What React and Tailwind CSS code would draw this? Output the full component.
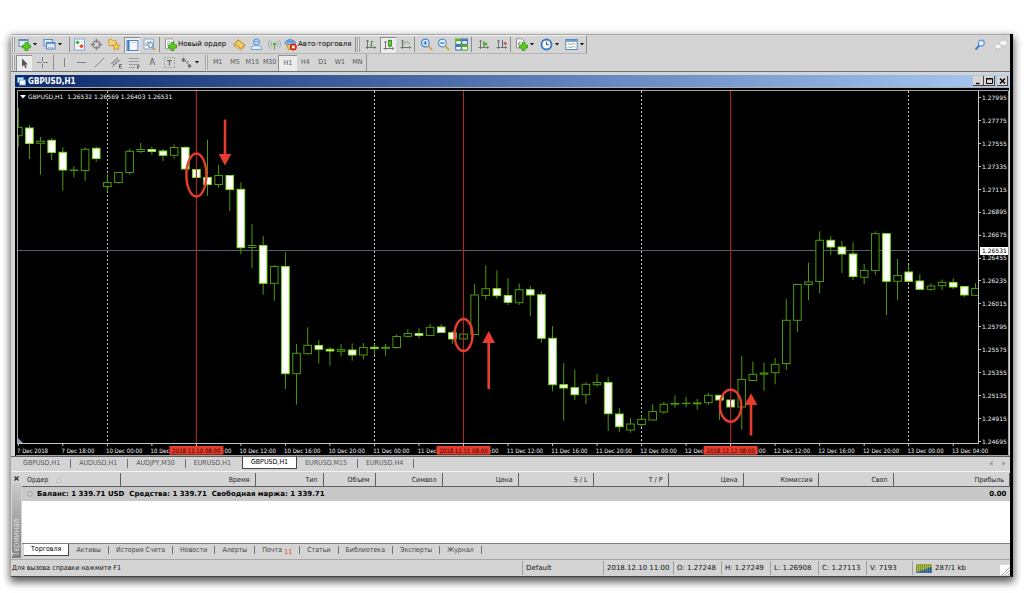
import React from "react";

/* ---------- chart data: [high, low, bodyTop, bodyBottom, filled] in canvas units ---------- */
const CANDLES = [
  [108, 147, 127.3, 135.7, 0], [125, 159, 128, 143.5, 1], [137, 174.7, 141.3, 143.3, 0], [138.3, 160.3, 140.3, 152.5, 1],
  [147.3, 190.7, 152.3, 170, 1], [166, 177.3, 170, 170.4, 0], [147.3, 180.7, 149.3, 170.5, 0], [146.7, 161.7, 148.3, 158.5, 1],
  [174, 191.7, 182.5, 186.5, 0], [172, 183.7, 172.5, 182.5, 0], [149, 174.7, 151.3, 172.5, 0], [143, 153, 149.5, 151.5, 0],
  [146.7, 154.7, 149.5, 151.5, 1], [149, 161, 151, 155.3, 1], [144.3, 158.7, 147.5, 155.3, 0], [146, 169.3, 147.5, 169, 1],
  [169, 178, 169.5, 177.5, 1], [139.7, 196, 177.5, 184.5, 1], [165, 187.7, 175.5, 184.5, 0], [175.3, 211, 175.5, 189.5, 1],
  [182.3, 254.3, 189.3, 247.7, 1], [224.3, 268.3, 245.5, 247.5, 0], [236, 294.7, 245.5, 283.3, 1], [265, 300.7, 266.5, 283.3, 0],
  [252.3, 389, 266.5, 373.7, 1], [344, 404.7, 353.3, 373.7, 0], [327.3, 354.3, 345.3, 353.7, 0], [340, 363.3, 345.5, 349.3, 1],
  [347, 365.7, 349.3, 351, 1], [344, 356.3, 349.7, 351.3, 0], [343.3, 360.7, 350, 355, 1], [343, 359.3, 347.5, 355, 0],
  [344, 355, 347.3, 348.5, 1], [344, 355.7, 347.3, 348.3, 0], [334.3, 348.7, 336.5, 347.5, 0], [329.3, 337.7, 333.5, 336.3, 0],
  [328.3, 338.3, 333.5, 335.5, 1], [324, 336, 327.3, 335.5, 0], [324.3, 333, 327, 332.5, 1], [330.7, 344, 332.7, 339, 1],
  [332, 340, 334, 339, 0], [284, 335, 295, 334.5, 0], [265.3, 299.7, 288.7, 295.5, 0], [270.3, 298.7, 288.7, 295.7, 1],
  [278.3, 305, 295.5, 302.3, 1], [283.3, 305, 289.7, 302.7, 0], [285.7, 316.3, 289.7, 295, 1], [291.7, 342.7, 294.7, 338.3, 1],
  [326, 391.3, 338.3, 384.7, 1], [363, 420.7, 384.7, 388, 1], [369.7, 400, 387.7, 394.7, 1], [382.3, 404, 384.3, 394.7, 0],
  [374, 386.7, 382.5, 384.7, 0], [377, 431, 382.5, 413.7, 1], [408, 432.3, 414, 426.7, 1], [418, 432.7, 424, 430, 0],
  [415.7, 426.7, 419.3, 424.5, 0], [404.3, 420.3, 411.5, 420, 0], [402, 413.7, 404.3, 412, 0], [395.3, 407.7, 403.4, 404.2, 0],
  [397, 407, 403.3, 403.6, 0], [399, 409.7, 402.9, 403.8, 0], [393, 405, 395.3, 402.7, 0], [395, 420, 395.3, 400, 1],
  [399.7, 407.5, 400, 407, 1], [356, 429.7, 379.5, 407, 0], [361.7, 381.3, 374.3, 380.5, 0], [362.7, 390.7, 373, 374.2, 0],
  [358, 384.3, 364.3, 372.7, 0], [298.7, 370, 320.3, 363.5, 0], [283.7, 332, 284.5, 320.3, 0], [262.7, 300.3, 282, 284.5, 0],
  [231.3, 293.3, 240.3, 281.5, 0], [236.3, 255, 240.3, 247, 1], [241, 273, 247, 254, 1], [242.3, 280, 254, 276.5, 1],
  [264, 284, 270.5, 277.3, 0], [231.3, 274.7, 233.7, 270.5, 0], [233.3, 315, 233.7, 281.3, 1], [259, 300.3, 275.5, 281.3, 0],
  [265, 282.3, 272, 281.3, 1], [274, 290, 281, 289.3, 1], [283.3, 290.7, 286, 289.3, 0], [279.3, 290.3, 282.3, 285.7, 0],
  [278.3, 289, 282.5, 287, 1], [286, 297, 286.5, 295, 1], [283.3, 296, 288.5, 295.3, 0],
];
const barX = (i) => 18.3 + i * 11.13;

const PRICES = ["1.27995", "1.27775", "1.27555", "1.27335", "1.27115", "1.26895", "1.26675", "1.26455", "1.26235", "1.26015", "1.25795", "1.25575", "1.25355", "1.25135", "1.24915", "1.24695"];

const TIMES = ["7 Dec 2018", "7 Dec 18:00"];
["10", "11", "12"].forEach((d) => ["00", "04", "08", "12", "16", "20"].forEach((h) => TIMES.push(`${d} Dec ${h}:00`)));
TIMES.push("13 Dec 00:00", "13 Dec 04:00");

const MARKS = [
  { i: 16, label: "2018.12.10 08:00", cy: 175, rx: 10, ry: 21.5 },
  { i: 40, label: "2018.12.11 08:00", cy: 335, rx: 9, ry: 16 },
  { i: 64, label: "2018.12.12 08:00", cy: 405.7, rx: 10.7, ry: 16 },
];

function Chart() {
  return (
    <svg viewBox="15 88 994 368" className="block h-auto w-full font-['DejaVu_Sans',sans-serif]" role="img" aria-label="GBPUSD,H1" fontSize="6" fill="#f0f0f0">
      <rect x="15" y="88" width="994" height="368" fill="#000" />
      <path d="M17.5 444V90.5H1008.5V455.5H16" fill="none" stroke="#a0a4a4" />
      <path d="M978.5 90.5V443.5H17.5" fill="none" stroke="#c4c4c4" />
      <path d="M18 438v5h5z" fill="#8a9ab0" />
      <defs>
        <clipPath id="plot"><rect x="18" y="91" width="960" height="352" /></clipPath>
      </defs>
      <path d="M18 250.5H978" stroke="#56606e" />
      {[8, 32, 56, 80].map((i) => (
        <path key={i} d={`M${Math.floor(barX(i)) + 0.5} 91V443`} stroke="#c8c8c8" strokeDasharray="2 2" />
      ))}
      <g clipPath="url(#plot)">
        {CANDLES.map(([h, l, t, b, f], i) => (
          <g key={i} stroke={f ? "#7fe018" : "#4c9a06"}>
            <path d={`M${barX(i)} ${h}V${l}`} stroke="#4c9a06" />
            <rect x={barX(i) - 3.8} y={t} width="7.6" height={b - t} fill={f ? "#fff" : "#000"} />
          </g>
        ))}
      </g>
      {MARKS.map((m) => (
        <g key={m.i}>
          <path d={`M${barX(m.i)} 91V446`} stroke="#a82c22" strokeWidth="1.1" />
          <ellipse cx={barX(m.i)} cy={m.cy} rx={m.rx} ry={m.ry} fill="none" stroke="#e63c2e" strokeWidth="2.4" />
        </g>
      ))}
      <g fill="#e63c2e">
        <path d="M223.8 119.5h2.5V154h5l-6.3 11.5-6.3-11.5h5z" />
        <path d="M487.4 389h2.6V343h5l-6.3-12-6.3 12h5z" />
        <path d="M749.7 435.5h2.6V405h5l-6.3-11.7-6.3 11.7h5z" />
      </g>
      <path d="M20 95h6l-3 3.4z" fill="#fff" />
      <text x="28" y="98.700">GBPUSD,H1&nbsp; 1.26532 1.26569 1.26403 1.26531</text>
      {PRICES.map((p, k) => (
        <g key={p}>
          <path d={`M978 ${Math.round(97 + k * 22.93)}.5h3`} stroke="#c4c4c4" />
          <text x="982" y={99.8 + k * 22.93}>{p}</text>
        </g>
      ))}
      <rect x="980" y="247" width="28" height="8" fill="#fff" />
      <text x="982" y="253.200" fill="#000">1.26531</text>
      <g className="font-['DejaVu_Sans_Condensed',sans-serif]">
        {TIMES.map((t, k) => (
          <g key={t}>
            <path d={`M${barX(k * 4)} 443v3`} stroke="#c4c4c4" />
            <text x={barX(k * 4) - 1.3} y="453">{t}</text>
          </g>
        ))}
        {MARKS.map((m) => (
          <g key={m.i}>
            <rect x={barX(m.i) - 27} y="446" width="54" height="8.6" fill="#e63c2e" />
            <text x={barX(m.i)} y="453" textAnchor="middle" fill="#2a0400">{m.label}</text>
          </g>
        ))}
      </g>
    </svg>
  );
}

/* ---------- icons ---------- */
const Svg = ({ children, s = 13 }) => (
  <svg width={s} height={s} viewBox="0 0 13 13" fill="none" aria-hidden="true" className="shrink-0">{children}</svg>
);
const plus = <path d="M7 4.500h3v2.500h2.500v3H10v2.500H7V10H4.500V7H7z" fill="#5cd01e" stroke="#2c8a0c" strokeWidth=".7" />;
const axes = <path d="M3.500 2v9M1.500 9.500h10M2.500 3.500l1-1.500 1 1.500M10.200 8.400l1.500 1.100-1.500 1.100" stroke="#6a6a6a" strokeWidth=".9" />;

const ICONS = {
  newChart: <Svg><rect x="1" y="1.500" width="9" height="7" fill="#e8f0f8" stroke="#6a8fb8" /><path d="M1 2.200h9" stroke="#5a86b8" strokeWidth="1.500" />{plus}</Svg>,
  profiles: <Svg><rect x="1" y="1.500" width="8.500" height="6.500" fill="#dce9f6" stroke="#5c8cc4" /><rect x="3.500" y="4.500" width="8.500" height="6.500" fill="#e8f1fa" stroke="#4a80c0" /><path d="M4 5.500h8" stroke="#6c9fd8" strokeWidth="1.300" /><path d="M5 9.300h5.500" stroke="#9ab8dc" /></Svg>,
  market: <Svg><rect x="1.500" y="1" width="10" height="11" fill="#fff" stroke="#7aa6d4" /><path d="M4.500 2.200l2.200 2.200-2.200 2.200-2.200-2.200z" fill="#3cae2a" /><path d="M8.500 6l2.300 2.300-2.300 2.300-2.300-2.300z" fill="#e04a2a" /><path d="M7.500 4h3M3 8.500h2" stroke="#b4c8dc" strokeWidth=".8" /></Svg>,
  data: <Svg><circle cx="6.500" cy="6.500" r="3.600" stroke="#858585" strokeWidth="1.500" /><path d="M6.500 .8v4M6.500 8.200v4M.8 6.500h4M8.200 6.500h4" stroke="#858585" strokeWidth="1.300" /></Svg>,
  favorites: <Svg><path d="M.8 1.500h3l1 1.200h3.500v5H.8z" fill="#f4d478" stroke="#c8963c" strokeWidth=".8" /><path d="M8.300 4.500l1.200 2.400 2.700.4-2 1.900.5 2.700-2.400-1.300-2.400 1.300.5-2.700-2-1.900 2.700-.4z" fill="#f8cc48" stroke="#b8801c" strokeWidth=".7" /></Svg>,
  navigator: <Svg><rect x="1" y="1.500" width="11" height="10" fill="#f4f9ff" stroke="#4a84c8" /><path d="M1.500 2h2v9h-2z" fill="#3a78c4" /><path d="M5 3.500h6" stroke="#c0d4ec" /></Svg>,
  tester: <Svg><rect x="1" y="1" width="9.500" height="10" fill="#eef3f8" stroke="#88a8c8" /><path d="M3 8V5M5 7V3M7.500 5V3" stroke="#78a060" strokeWidth=".9" /><circle cx="7.500" cy="7" r="2.600" fill="#cfe4f8" fillOpacity=".8" stroke="#5a8cc4" /><path d="M9.500 9l2.600 3" stroke="#c8963c" strokeWidth="1.500" /></Svg>,
  order: <Svg><path d="M1.500.8h6l2 2v8h-8z" fill="#fff" stroke="#888" strokeWidth=".9" /><path d="M3 3.500h3.500M3 5.500h3M3 7.500h2" stroke="#999" strokeWidth=".8" />{plus}</Svg>,
  editor: <Svg><path d="M1 6.500L5 1.800l7 5.200-4 4.500z" fill="#ecc050" stroke="#a87820" strokeWidth=".8" /><path d="M1 6.500v1.800l7 4.200 4-4.500V7l-4 4z" fill="#fff4d0" stroke="#a87820" strokeWidth=".6" /><path d="M4.500 4.500l4.500 3.300" stroke="#fbe49c" strokeWidth="1.300" /></Svg>,
  community: <Svg><circle cx="6.500" cy="4" r="3" fill="#b8dcf8" stroke="#4c8cd4" /><path d="M1.500 11.500c-.8-2.700 1.200-3.600 3-3.800l4 .1c2.200.2 3.900 1.200 3.200 3.700z" fill="#e8f2fc" stroke="#6c9cd4" /><path d="M4.500 3.500h4" stroke="#6ca4e0" /></Svg>,
  signals: <Svg><circle cx="6.500" cy="6" r="1.600" fill="#5aa83c" /><path d="M6.500 7v5" stroke="#6cae48" strokeWidth="1.300" /><path d="M4 3.500a3.600 3.600 0 000 5.200M9 3.500a3.600 3.600 0 010 5.200" stroke="#8cb87c" /><path d="M2.200 1.700a6 6 0 000 8.800M10.800 1.700a6 6 0 010 8.800" stroke="#94aeca" /></Svg>,
  auto: <Svg><path d="M1.200 5h10L8 11.500H4.500z" fill="#f0c454" stroke="#b88424" strokeWidth=".7" /><ellipse cx="6.200" cy="4.500" rx="5.500" ry="2" fill="#8cc0f0" stroke="#3c78b8" strokeWidth=".7" /><path d="M3 4C3 .5 9.400.5 9.400 4z" fill="#6cace8" stroke="#3c78b8" strokeWidth=".7" /><circle cx="9.300" cy="9" r="3.300" fill="#dc3420" stroke="#a81c10" strokeWidth=".5" /><rect x="8" y="7.700" width="2.600" height="2.600" fill="#fff" /></Svg>,
  bars: <Svg>{axes}<path d="M7.500 3v5.500M7.500 3.500h1.600M5.900 7.800h1.600" stroke="#3c9a2c" strokeWidth="1.100" /></Svg>,
  candles: <Svg>{axes}<path d="M8 .5v8" stroke="#2c8a1c" /><rect x="6.400" y="1.500" width="3.200" height="5.500" fill="#5cd02c" stroke="#2c8a1c" strokeWidth=".8" /></Svg>,
  line: <Svg>{axes}<path d="M4 7.500c1.500-4 3.500-5 7-1.500" stroke="#5cae4c" /></Svg>,
  zoomIn: <Svg><circle cx="5.300" cy="5" r="3.900" fill="#e4f2fe" stroke="#4484d0" strokeWidth="1.200" /><path d="M3.300 5h4M5.300 3v4" stroke="#2c68c0" strokeWidth="1.200" /><path d="M8.400 8.200l3.600 3.600" stroke="#d0a040" strokeWidth="1.900" /></Svg>,
  zoomOut: <Svg><circle cx="5.300" cy="5" r="3.900" fill="#e4f2fe" stroke="#5c90d0" strokeWidth="1.200" /><path d="M3.300 5h4" stroke="#2c68c0" strokeWidth="1.200" /><path d="M8.400 8.200l3.600 3.600" stroke="#d0a040" strokeWidth="1.900" /></Svg>,
  tile: <Svg><g strokeWidth=".9"><rect x=".8" y="1" width="5.400" height="5.200" fill="#fff" stroke="#3c9a1c" /><rect x="6.900" y="1" width="5.400" height="5.200" fill="#fff" stroke="#2c60b0" /><rect x=".8" y="6.800" width="5.400" height="5.200" fill="#fff" stroke="#2c60b0" /><rect x="6.900" y="6.800" width="5.400" height="5.200" fill="#fff" stroke="#3c9a1c" /></g><path d="M.5 2.300h6M6.600 8.100h6" stroke="#4cae24" strokeWidth="2" /><path d="M6.600 2.300h6M.5 8.100h6" stroke="#3c74c8" strokeWidth="2" /></Svg>,
  scroll: <Svg>{axes}<path d="M6.500 3.500l4 2.500-4 2.500z" fill="#5cc030" stroke="#2c8a1c" strokeWidth=".5" /></Svg>,
  shift: <Svg>{axes}<path d="M7.500 2v7" stroke="#3c68b0" /><path d="M8.500 5.500h3.500M10.200 3.800v3.400" stroke="#d04028" strokeWidth="1.100" /></Svg>,
  indicators: <Svg><path d="M1.500.8h5l2.500 2v7h-7.500z" fill="#fff" stroke="#888" strokeWidth=".9" /><path d="M3.300 7.500c0-3 .8-4 2.500-4M3 5.500h2.500" stroke="#777" strokeWidth=".8" />{plus}</Svg>,
  clock: <Svg><circle cx="6.500" cy="6.500" r="5" fill="#f4f9ff" stroke="#3c78cc" strokeWidth="1.900" /><path d="M6.500 3.600v3.100h2.400" stroke="#444" strokeWidth=".9" /></Svg>,
  template: <Svg><rect x=".8" y="1.500" width="11.400" height="10" fill="#fff" stroke="#5c88bc" /><path d="M1 2.900h11" stroke="#6c9cd4" strokeWidth="1.900" /><path d="M2.500 6.500c2-2 3 .8 4.500-.3s2-.5 3.500 0M2.500 9.500c2-1.500 3 .8 4.500-.3s2-.5 3.500 0" stroke="#7c9c7c" strokeWidth=".8" /></Svg>,
  cursor: <Svg><path d="M4 1.500v8.300l2-1.700 1.400 3.200 1.400-.6-1.400-3.100h2.600z" fill="#555" /></Svg>,
  cross: <Svg><path d="M6.500 1v4.500M6.500 7.500V12M1 6.500h4.500M7.500 6.500H12" stroke="#808080" /></Svg>,
  vline: <Svg><path d="M6.500 2v9" stroke="#808080" /></Svg>,
  hline: <Svg><path d="M2 6.500h9" stroke="#808080" /></Svg>,
  trend: <Svg><path d="M2 11l9-9" stroke="#808080" /></Svg>,
  channel: <Svg><path d="M1 8l7-6.500M2 11l8.500-7.500M2.500 6l1.500 3.500M4.500 4.500L6 8M6.500 2.500L8 6" stroke="#777" strokeWidth=".9" /><path d="M11.800 8.500H9.500v3.500h2.300M9.500 10.200h2" stroke="#555" strokeWidth=".8" /></Svg>,
  fibo: <Svg><path d="M1 2.500h10.500M1 5.500h10.500M1 8.500h10.500M1 11.500h6" stroke="#888" strokeDasharray="1.500 .6" /><path d="M9.500 12.800V9.800h2.300M9.500 11.200h1.800" stroke="#555" strokeWidth=".8" /></Svg>,
  label: <Svg><rect x="1.500" y="1.500" width="10" height="10" stroke="#999" strokeDasharray="1.500 1" strokeWidth=".9" /><path d="M4 4.500h5M6.500 4.500v5" stroke="#666" strokeWidth="1.200" /></Svg>,
  shapes: <Svg><path d="M3.500 1.500L1 4.500h1.700V6h1.600V4.500H6zM9.500 12L7 9.500h1.700V8h1.600v1.500H12z" fill="#666" /><path d="M5 5l3.500 3.500M7 5l2 1" stroke="#777" /></Svg>,
};

const Sep = () => <span className="block h-[15px] w-px shrink-0 bg-[#8c8c8c]" />;
const Grip = () => <span className="block h-[15px] w-[3px] shrink-0 border-x border-[#a0a0a0] bg-[#e8e8e8]" />;

function Tool({ icon, name, active }) {
  return (
    <button type="button" aria-label={name} aria-pressed={active}
      className={"flex h-4 w-4 shrink-0 items-center justify-center " + (active ? "bg-[#ececec] border-t border-l border-[#909090]" : "")}>
      {ICONS[icon]}
    </button>
  );
}

function MenuTool({ icon, name }) {
  return (
    <button type="button" aria-label={name} className="flex h-4 w-[19px] shrink-0 items-center justify-between">
      {ICONS[icon]}
      <svg width="4" height="3" viewBox="0 0 4 3" className="shrink-0" aria-hidden="true"><path d="M0 0h4L2 2.600z" fill="#111" /></svg>
    </button>
  );
}

function TopToolbar() {
  return (
    <div className="flex h-5 items-stretch justify-between border-t border-[#a8a8a8]">
      <div className="flex items-center border-t border-r border-b border-t-[#f0f0f0] border-r-[#909090] border-b-[#b4b4b4] pl-px font-['DejaVu_Sans',sans-serif] text-[7px]">
        <Grip />
        <div className="ml-[3px] flex w-[44px] justify-between">
          <MenuTool icon="newChart" name="Новый график" />
          <MenuTool icon="profiles" name="Профили" />
        </div>
        <div className="ml-[7px]"><Sep /></div>
        <div className="ml-px flex w-[86px] justify-between">
          <Tool icon="market" name="Обзор рынка" />
          <Tool icon="data" name="Окно данных" />
          <Tool icon="favorites" name="Избранное" />
          <Tool icon="navigator" name="Навигатор" active />
          <Tool icon="tester" name="Тестер стратегий" />
        </div>
        <div className="ml-[2px]"><Sep /></div>
        <button type="button" className="ml-1 flex h-4 w-[63px] items-center gap-px whitespace-nowrap">{ICONS.order}Новый ордер</button>
        <div className="ml-1 flex w-[51px] justify-between">
          <Tool icon="editor" name="MetaEditor" />
          <Tool icon="community" name="Сообщество" />
          <Tool icon="signals" name="Сигналы" />
        </div>
        <button type="button" className="ml-[2px] flex h-4 w-[71px] items-center gap-px whitespace-nowrap">{ICONS.auto}Авто-торговля</button>
        <Sep />
        <div className="ml-px"><Grip /></div>
        <div className="ml-[2px] flex w-[51px] justify-between">
          <Tool icon="bars" name="Бары" />
          <Tool icon="candles" name="Свечи" active />
          <Tool icon="line" name="Линия" />
        </div>
        <div className="ml-px"><Sep /></div>
        <div className="ml-[3px] flex w-[51px] justify-between">
          <Tool icon="zoomIn" name="Увеличить" />
          <Tool icon="zoomOut" name="Уменьшить" />
          <Tool icon="tile" name="Окна мозаикой" />
        </div>
        <div className="ml-[2px]"><Sep /></div>
        <div className="ml-[3px] flex w-[34px] justify-between">
          <Tool icon="scroll" name="Автопрокрутка" />
          <Tool icon="shift" name="Сдвиг графика" />
        </div>
        <div className="ml-px"><Sep /></div>
        <div className="mr-[2px] ml-1 flex w-[69px] justify-between">
          <MenuTool icon="indicators" name="Индикаторы" />
          <MenuTool icon="clock" name="Периоды" />
          <MenuTool icon="template" name="Шаблоны" />
        </div>
      </div>
      <div className="flex items-center gap-2 pr-[2px]">
        <button type="button" aria-label="Поиск">
          <svg width="12" height="12" viewBox="0 0 12 12" fill="none" aria-hidden="true"><circle cx="7.300" cy="4.200" r="3" fill="#e4f0fc" stroke="#5c94dc" strokeWidth="1.200" /><path d="M5.200 6.600L1.500 10.500" stroke="#3c7cd0" strokeWidth="2" /></svg>
        </button>
        <button type="button" aria-label="Чат">
          <svg width="14" height="12" viewBox="0 0 14 12" aria-hidden="true"><g fill="#f4f4f4" stroke="#b0b0b0" strokeWidth=".6"><path d="M9.500 1c2.600 0 4 1.300 4 2.900 0 1-.5 1.700-1.200 2.200l.5 1.700-1.900-1.100c-3 .5-5.400-.9-5.400-2.800C5.500 2.300 7 1 9.500 1z" /><path d="M4 5c2.200 0 3.500 1 3.500 2.400S6.200 9.700 4 9.700l-2 1.300.3-1.700C1.200 9 .6 8.300.6 7.400.6 6 1.800 5 4 5z" /></g></svg>
        </button>
      </div>
    </div>
  );
}

const PERIODS = ["M1", "M5", "M15", "M30", "H1", "H4", "D1", "W1", "MN"];

function LineToolbar() {
  return (
    <div className="flex h-[18px] border-b border-[#707070]">
      <div className="flex items-center border-r border-[#909090] pl-px text-[7px] text-[#555]">
        <Grip />
        <div className="ml-px flex w-[34px] justify-between">
          <Tool icon="cursor" name="Курсор" active />
          <Tool icon="cross" name="Перекрестие" />
        </div>
        <div className="ml-[3px]"><Sep /></div>
        <div className="ml-[2px] flex w-[122px] justify-between">
          <Tool icon="vline" name="Вертикальная линия" />
          <Tool icon="hline" name="Горизонтальная линия" />
          <Tool icon="trend" name="Трендовая линия" />
          <Tool icon="channel" name="Канал" />
          <Tool icon="fibo" name="Фибоначчи" />
          <button type="button" className="h-4 w-4 text-[9px]">A</button>
          <Tool icon="label" name="Метка" />
        </div>
        <div className="ml-[2px]"><MenuTool icon="shapes" name="Стрелки" /></div>
        <div className="ml-[6px]"><Grip /></div>
        <div className="ml-px flex w-[157px]">
          {PERIODS.map((p) => (
            <button key={p} type="button" aria-pressed={p === "H1"}
              className={"h-4 flex-1 text-center " + (p === "H1" ? "border-t border-l border-[#909090] bg-[#ececec]" : "")}>{p}</button>
          ))}
        </div>
      </div>
    </div>
  );
}

const WinButton = ({ name, children }) => (
  <button type="button" aria-label={name} className="flex h-[10px] w-[11px] items-center justify-center border-r border-b border-[#444] bg-[#d6d6d2]">
    <svg width="9" height="8" viewBox="0 0 9 8" fill="none" stroke="#000" aria-hidden="true">{children}</svg>
  </button>
);

function ChartWindow() {
  return (
    <section className="pt-[3px] pr-px pl-1">
      <div className="flex h-[13px] items-center justify-between border-b border-[#b0b0b0] bg-linear-to-r from-[#0a2a6c] via-[#5878b4] to-[#a8caf2] pr-px pl-[2px]">
        <h1 className="flex items-center gap-[2px] pt-px text-[8px] font-bold text-white">
          <svg width="9" height="9" viewBox="0 0 9 9" aria-hidden="true"><rect x=".5" y=".5" width="6" height="5" fill="#d8ecff" stroke="#5c9cdc" /><rect x="2.500" y="3" width="6" height="5" fill="#fff" stroke="#5c9cdc" /></svg>
          GBPUSD,H1
        </h1>
        <div className="flex">
          <WinButton name="Свернуть"><path d="M2 6.500h3.500" strokeWidth="1.400" /></WinButton>
          <WinButton name="Развернуть"><path d="M1.500 1.500h6v5h-6zM1 2h7" /></WinButton>
          <span className="w-[2px]" />
          <WinButton name="Закрыть"><path d="M2 1.500l5 5M7 1.500l-5 5" strokeWidth="1.500" /></WinButton>
        </div>
      </div>
      <Chart />
    </section>
  );
}

const CHART_TABS = ["GBPUSD,H1", "AUDUSD,H1", "AUDJPY,M30", "EURUSD,H1", "GBPUSD,H1", "EURUSD,M15", "EURUSD,H4"];

function ChartTabs() {
  return (
    <nav className="flex h-[15px] items-start justify-between border-t border-[#606060] text-[7px] text-[#555]">
      <div className="flex pl-1">
        {CHART_TABS.map((t, i) =>
          i === 4 ? (
            <button key={i} type="button" aria-current="true" className="h-3 border-r border-b border-l border-[#444] bg-white px-2 text-black">{t}</button>
          ) : (
            <button key={i} type="button" className="flex h-3 items-center pl-2">
              {t}
              <span className={"ml-[10px] h-[9px] w-px " + (i === 3 ? "bg-transparent" : "bg-[#707070]")} />
            </button>
          )
        )}
      </div>
      <div className="flex h-3 items-center gap-[9px] pr-1">
        <button type="button" aria-label="Назад"><svg width="4" height="5" viewBox="0 0 4 5" aria-hidden="true"><path d="M3.500 0v5L.5 2.500z" fill="#999" /></svg></button>
        <button type="button" aria-label="Вперед"><svg width="4" height="5" viewBox="0 0 4 5" aria-hidden="true"><path d="M.5 0v5l3-2.500z" fill="#999" /></svg></button>
      </div>
    </nav>
  );
}

const COLUMNS = [
  ["Ордер", "w-[98px]"], ["Время", "w-[135px]"], ["Тип", "w-[68px]"], ["Объем", "w-[52px]"], ["Символ", "w-[67px]"], ["Цена", "w-[76px]"],
  ["S / L", "w-[75px]"], ["T / P", "w-[75px]"], ["Цена", "w-[75px]"], ["Комиссия", "w-[75px]"], ["Своп", "w-[75px]"], ["Прибыль", ""],
];
const TERMINAL_TABS = ["Активы", "История Счета", "Новости", "Алерты", "Почта", "Статьи", "Библиотека", "Эксперты", "Журнал"];

function Terminal() {
  return (
    <section className="flex border-t border-[#f4f4f4] pt-px">
      <div className="flex w-[11px] shrink-0 flex-col items-center">
        <button type="button" aria-label="Закрыть терминал" className="flex h-[10px] items-center">
          <svg width="5" height="5" viewBox="0 0 5 5" aria-hidden="true"><path d="M.5.5l4 4M4.500.5l-4 4" stroke="#222" strokeWidth="1.100" /></svg>
        </button>
        <div className="h-[75px] w-[9px] rotate-180 overflow-hidden bg-linear-to-t from-[#cacaca] to-[#808080] pt-[2px] text-[8px] leading-[9px] whitespace-nowrap text-[#dcdcdc] [writing-mode:vertical-rl]">
          Терминал
        </div>
      </div>
      <div className="min-w-0 flex-1">
        <div className="h-[71px] border-b border-[#808080] bg-white">
          <table className="w-full table-fixed border-collapse">
            <thead>
              <tr className="h-[13px] bg-[#d4d4d4] text-[7px]">
                {COLUMNS.map(([c, w], i) => (
                  <th key={i} scope="col" className={w + " border-r border-b border-[#606060] px-[5px] pt-[2px] pb-0 leading-[10px] font-normal text-[#222] " + (i === 0 ? "text-left" : "text-right")}>
                    {c}
                    {i === 0 && <svg width="6" height="5" viewBox="0 0 6 5" className="ml-2 inline" aria-hidden="true"><path d="M.5 4.500h5L3 .5z" fill="#e4e4e4" stroke="#aaa" strokeWidth=".6" /></svg>}
                  </th>
                ))}
              </tr>
            </thead>
            <tbody className="font-['DejaVu_Sans',sans-serif]">
              <tr className="h-[14px] bg-[#c8c8c8] text-[7px] leading-[14px] font-bold text-black">
                <td colSpan={11} className="px-[5px] py-0 whitespace-nowrap">
                  <svg width="6" height="6" viewBox="0 0 6 6" className="mr-1 inline" aria-hidden="true"><circle cx="3" cy="3" r="2.200" fill="#ddd" stroke="#999" /></svg>
                  Баланс: 1 339.71 USD&nbsp; Средства: 1 339.71&nbsp; Свободная маржа: 1 339.71
                </td>
                <td className="px-[3px] py-0 text-right">0.00</td>
              </tr>
            </tbody>
          </table>
        </div>
        <nav className="flex h-[15px] items-start pl-[2px] text-[7px] text-[#444]">
          <button type="button" aria-current="true" className="h-3 border-r border-b border-[#444] bg-white px-[7px] text-black">Торговля</button>
          {TERMINAL_TABS.map((t) => (
            <button key={t} type="button" className="flex h-3 items-center pl-[7px]">
              {t}
              {t === "Почта" && <span className="ml-[2px] self-end leading-[8px] text-[#e63c2e]">11</span>}
              <span className="ml-[7px] h-2 w-px bg-[#707070]" />
            </button>
          ))}
        </nav>
      </div>
    </section>
  );
}

const QUOTES = [["O: 1.27248", "w-[48px]"], ["H: 1.27249", "w-[49px]"], ["L: 1.26908", "w-[48px]"], ["C: 1.27113", "w-[48px]"], ["V: 7193", "w-[46px]"]];
const cell = "flex h-[14px] items-center border-l border-[#a0a0a0] pl-[3px] whitespace-nowrap font-['DejaVu_Sans',sans-serif] ";

function StatusBar() {
  return (
    <footer className="flex h-[17px] items-center border-t border-[#a8a8a8] text-[7px] text-[#111]">
      <span className="flex-1 pl-px">Для вызова справки нажмите F1</span>
      <span className={cell + "w-[81px]"}>Default</span>
      <span className={cell + "w-[70px]"}>2018.12.10 11:00</span>
      {QUOTES.map(([q, w]) => <span key={q} className={cell + w}>{q}</span>)}
      <span className={cell + "w-[98px] gap-[2px]"}>
        <svg width="17" height="9" viewBox="0 0 17 9" aria-hidden="true">
          {[0, 2, 4, 6, 8, 10, 12, 14].map((x, i) => (
            <g key={x}>
              <rect x={x} y="0" width="1.600" height="9" fill="#8a9a1c" />
              <rect x={x} y={8 - i * 0.7} width="1.600" height={1 + i * 0.7} fill="#2c5c94" />
            </g>
          ))}
        </svg>
        287/1 kb
        <svg width="10" height="10" viewBox="0 0 10 10" className="ml-auto self-end" aria-hidden="true"><rect width="10" height="10" fill="#fff" /><path d="M2 10l8-8M5 10l5-5M8 10l2-2" stroke="#aaa" /></svg>
      </span>
    </footer>
  );
}

export default function App() {
  return (
    <main className="bg-white px-[11px] pt-[34px] pb-4 font-['DejaVu_Sans_Condensed','Noto_Sans',sans-serif]">
      <div className="border-r-[3px] border-b border-r-black border-b-[#444] bg-[#d4d4d4] shadow-[0_4px_8px_1px_rgba(0,0,0,0.65)]">
        <TopToolbar />
        <LineToolbar />
        <ChartWindow />
        <ChartTabs />
        <Terminal />
        <StatusBar />
      </div>
    </main>
  );
}
